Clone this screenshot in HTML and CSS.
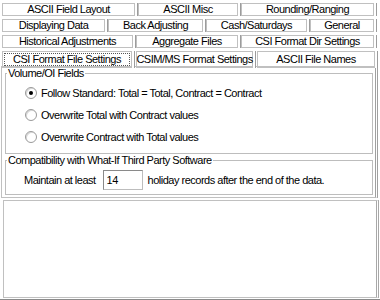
FILE: index.html
```html
<html>
<head>
<link rel="stylesheet" href="styles.css">
</head>
<body>

<div class="tabs">
	<div class="tab-row r1">
		<div class="tab">ASCII Field Layout</div>
		<div class="tab">ASCII Misc</div>
		<div class="tab">Rounding/Ranging</div>
	</div>
	<div class="tab-row r2">
		<div class="tab">Displaying Data</div>
		<div class="tab">Back Adjusting</div>
		<div class="tab">Cash/Saturdays</div>
		<div class="tab">General</div>
	</div>
	<div class="tab-row r3">
		<div class="tab">Historical Adjustments</div>
		<div class="tab">Aggregate Files</div>
		<div class="tab">CSI Format Dir Settings</div>
	</div>
	<div class="tab-row r4">
		<div class="tab active"><span class="focus">CSI Format File Settings</span></div>
		<div class="tab">CSIM/MS Format Settings</div>
		<div class="tab">ASCII File Names</div>
	</div>
</div>

<div class="page">
	<fieldset class="group vol">
		<legend>Volume/OI Fields</legend>
		<div class="opt"><span class="radio checked"></span>Follow Standard: Total = Total, Contract = Contract</div>
		<div class="opt"><span class="radio"></span>Overwrite Total with Contract values</div>
		<div class="opt"><span class="radio"></span>Overwrite Contract with Total values</div>
	</fieldset>

	<fieldset class="group compat">
		<legend>Compatibility with What-If Third Party Software</legend>
		<div class="line">
			<span class="lbl">Maintain at least</span>
			<input type="text" class="num" value="14"/>
			<span>holiday records after the end of the data.</span>
		</div>
	</fieldset>
</div>

<div class="lower"></div>
<div class="bottom-line"></div>

</body>
</html>
```

FILE: styles.css
```css
*{
	box-sizing:border-box;
}
body{
	margin:0;
	width:380px;
	height:300px;
	overflow:hidden;
	background-color:#ffffff;
	color:#000;
	font-family:'Liberation Sans',Arial,sans-serif;
	font-size:11px;
	letter-spacing:-0.5px;
}

.tabs{
	display:flex;
	flex-direction:column;
	gap:3px;
	padding:3px 0 0 2px;
}
.tab-row{
	display:grid;
	column-gap:3px;
	height:13px;
}
.r1{grid-template-columns:133px 100px 133px;}
.r2{grid-template-columns:103px 95px 101px 64px;}
.r3{grid-template-columns:131px 102px 133px;}
.r4{grid-template-columns:130px 117px 118px;column-gap:4px;}
.tab{
	display:flex;
	align-items:center;
	justify-content:center;
	white-space:nowrap;
	line-height:11px;
	border:1px solid #c0c0c0;
	box-shadow:2px 0 0 #ffffff,3px 0 0 #9c9c9c;
}
.tab.active{
	padding:1px;
}
.focus{
	flex:1;
	align-self:stretch;
	display:flex;
	align-items:center;
	justify-content:center;
	border:1px dotted #555;
}

.page{
	margin:2px 2px 0 1px;
	height:132px;
	border:1px solid #c0c0c0;
	border-right:3px double #a0a0a0;
	padding:1px 2px 0 3px;
}
.group{
	margin:0;
	border:1px solid #bdbdbd;
	padding:0;
}
.group legend{
	line-height:11px;
	padding:0 1px;
	margin-left:1px;
}
.vol{
	padding:3px 0 5px 0;
}
.opt{
	display:flex;
	align-items:center;
	height:22px;
	padding-left:19px;
}
.radio{
	width:12px;
	height:12px;
	margin-right:4px;
	border:1px solid #9a9a9a;
	border-radius:50%;
	background-color:#fff;
	display:flex;
	align-items:center;
	justify-content:center;
	box-shadow:inset 1px 1px 0 #d8d8d8;
}
.radio.checked::after{
	content:'';
	width:4px;
	height:4px;
	border-radius:50%;
	background-color:#000;
}

.compat{
	margin-top:1px;
	padding:4px 0 4px 0;
}
.line{
	display:flex;
	align-items:center;
	padding-left:18px;
}
.lbl{
	margin-right:7px;
}
.num{
	width:40px;
	height:20px;
	margin:0 5px 0 0;
	padding:0 3px;
	border:1px solid #bdbdbd;
	border-top-color:#8a8a8a;
	border-left-color:#8a8a8a;
	font-family:'Liberation Sans',Arial,sans-serif;
	font-size:11px;
	letter-spacing:-0.5px;
	color:#000;
	outline:none;
}

.lower{
	margin:2px 1px 0 3px;
	height:98px;
	border:1px solid #c0c0c0;
	border-right:3px double #a8a8a8;
}
.bottom-line{
	height:2px;
	background-color:#8a8a8a;
	margin-top:1px;
}
```
